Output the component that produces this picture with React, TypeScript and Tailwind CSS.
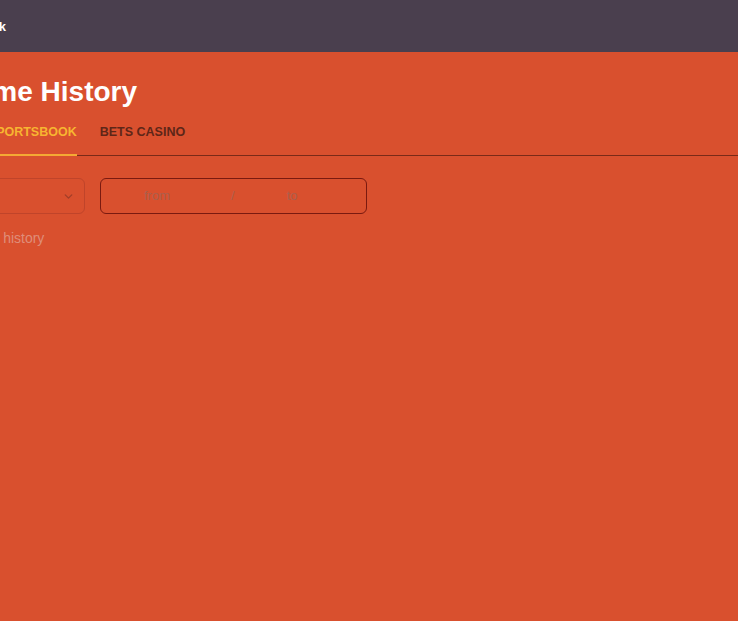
import { ChevronDown } from "lucide-react";

export default function App() {
  return (
    <div
      className="min-h-[621px] w-full overflow-hidden bg-[#d9502e]"
      style={{ fontFamily: '"Liberation Sans", Arial, sans-serif' }}
    >
      {/* Top bar */}
      <header className="h-[52px] bg-[#4a3f4e] flex items-center">
        <a className="-ml-[25px] text-[13px] font-bold text-white leading-none">
          Back
        </a>
      </header>

      {/* Content */}
      <main className="-ml-[47px] pt-[24px]">
        <h1 className="ml-[2px] text-[28px] font-bold leading-[32px] text-white">
          Game History
        </h1>

        <div className="mt-[7px] flex gap-[23px] border-b border-[#7a2a18]">
          <button className="-ml-[2px] -mb-px border-b-2 border-[#f4a934] pt-[9px] pb-[14px] text-[12.5px] font-bold leading-[16px] text-[#f7b531]">
            BETS SPORTSBOOK
          </button>
          <button className="-mb-px border-b-2 border-transparent pt-[9px] pb-[14px] text-[12.5px] font-bold leading-[16px] text-[#5e2618]">
            BETS CASINO
          </button>
        </div>

        <div className="mt-[22px] flex gap-[15px]">
          <div className="h-[36px] w-[132px] rounded-[6px] border border-[#c0442a] flex items-center justify-end pr-[9px]">
            <ChevronDown className="h-[13px] w-[13px] text-[#a23e28]" strokeWidth={2.5} />
          </div>
          <div className="h-[36px] w-[267px] rounded-[6px] border border-[#7a1a10] flex items-center text-[13px] text-[#ab5f4c]">
            <span className="ml-[43px]">from</span>
            <span className="ml-[61px]">/</span>
            <span className="ml-[52px]">to</span>
          </div>
        </div>

        <p className="ml-[5px] mt-[14px] text-[14px] leading-[20px] text-[#df8d79]">
          No bet history
        </p>
      </main>
    </div>
  );
}
